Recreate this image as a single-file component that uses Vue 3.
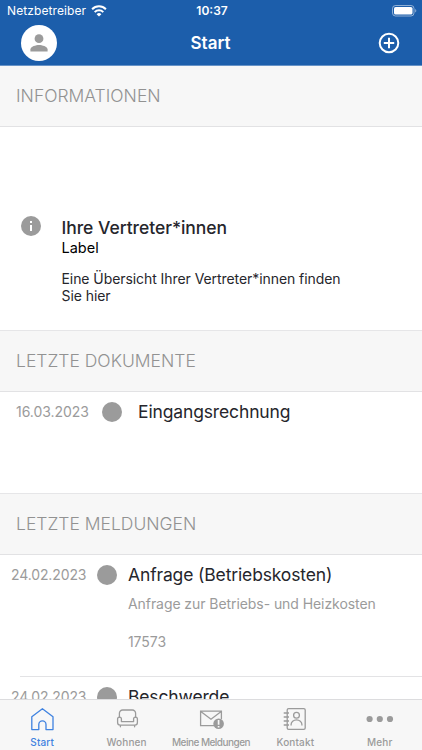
<script setup>
import { ref } from 'vue'

// letzte Dokumente und Meldungen der Startseite
const documents = [{ date: '16.03.2023', title: 'Eingangsrechnung' }]

const messages = [
  {
    date: '24.02.2023',
    title: 'Anfrage (Betriebskosten)',
    text: 'Anfrage zur Betriebs- und Heizkosten',
    number: '17573',
  },
  { date: '24.02.2023', title: 'Beschwerde', text: '', number: '' },
]

const tabs = [
  { id: 'start', label: 'Start' },
  { id: 'wohnen', label: 'Wohnen' },
  { id: 'meldungen', label: 'Meine Meldungen' },
  { id: 'kontakt', label: 'Kontakt' },
  { id: 'mehr', label: 'Mehr' },
]

const active_tab = ref('start')
</script>

<template>
  <div class="screen">
    <header class="header">
      <!-- Statusleiste -->
      <div class="status_bar">
        <div class="carrier">
          <span class="carrier_name">Netzbetreiber</span>
          <svg class="wifi" width="16" height="12" viewBox="0 0 16 12">
            <g fill="none" stroke="#fff" stroke-width="2">
              <path d="M1.1 4.2a9.8 9.8 0 0 1 13.8 0" />
              <path d="M3.7 7.1a6.1 6.1 0 0 1 8.6 0" />
            </g>
            <path d="M8 11.6 5.6 9.2a3.4 3.4 0 0 1 4.8 0z" fill="#fff" />
          </svg>
        </div>
        <span class="clock">10:37</span>
        <svg class="battery" width="25" height="12" viewBox="0 0 25 12">
          <rect x=".5" y=".5" width="21.5" height="10.5" rx="3" fill="none" stroke="#fff" stroke-opacity=".5" />
          <rect x="2" y="2" width="18.5" height="7.5" rx="1.6" fill="#fff" />
          <path d="M23.2 4v3.6c1.5-.6 1.5-3 0-3.6z" fill="#fff" fill-opacity=".5" />
        </svg>
      </div>

      <!-- Titelzeile -->
      <div class="nav_bar">
        <button class="avatar">
          <svg width="18" height="18" viewBox="0 0 18 18" fill="#9b9b9b">
            <circle cx="9" cy="4.7" r="4.4" />
            <path d="M.4 17.6v-2.2c0-2.9 5.7-4.4 8.6-4.4s8.6 1.5 8.6 4.4v2.2z" />
          </svg>
        </button>
        <h1 class="title">Start</h1>
        <button class="add">
          <svg width="22" height="22" viewBox="0 0 22 22" fill="none" stroke="#fff" stroke-width="2">
            <circle cx="11" cy="11" r="9.3" />
            <path d="M11 5.8v10.4M5.8 11h10.4" />
          </svg>
        </button>
      </div>
    </header>

    <main class="content">
      <h2 class="section_title informationen">INFORMATIONEN</h2>
      <section class="info">
        <svg class="info_icon" width="20" height="20" viewBox="0 0 20 20">
          <circle cx="10" cy="10" r="10" fill="#9b9b9b" />
          <path d="M9 5h2v2H9zM9 9h2v6H9z" fill="#fff" />
        </svg>
        <div class="info_body">
          <h3 class="info_title">Ihre Vertreter*innen</h3>
          <p class="info_label">Label</p>
          <p class="info_text">Eine Übersicht Ihrer Vertreter*innen finden<br />Sie hier</p>
        </div>
      </section>

      <h2 class="section_title dokumente">LETZTE DOKUMENTE</h2>
      <section class="documents">
        <div v-for="doc in documents" :key="doc.title" class="row">
          <span class="date">{{ doc.date }}</span>
          <span class="dot"></span>
          <h3 class="row_title">{{ doc.title }}</h3>
        </div>
      </section>

      <h2 class="section_title meldungen">LETZTE MELDUNGEN</h2>
      <section class="messages">
        <article v-for="(message, index) in messages" :key="index" class="message">
          <div class="row">
            <span class="date">{{ message.date }}</span>
            <span class="dot"></span>
            <h3 class="row_title">{{ message.title }}</h3>
          </div>
          <p class="message_text">{{ message.text }}</p>
          <p class="message_number">{{ message.number }}</p>
        </article>
      </section>
    </main>

    <!-- Tableiste unten -->
    <nav class="tab_bar">
      <button
        v-for="tab in tabs"
        :key="tab.id"
        class="tab"
        :class="[tab.id, { active: active_tab === tab.id }]"
        @click="active_tab = tab.id"
      >
        <svg class="tab_icon" width="28" height="26" viewBox="0 0 28 26" fill="none" stroke="currentColor" stroke-width="1.3">
          <path
            v-if="tab.id === 'start'"
            d="M3.8 9.7 14.4 1.7 25 9.7v12.9h-7v-5.2a3.6 3.6 0 0 0-7.2 0v5.2h-7z"
            stroke-linejoin="round"
          />
          <g v-else-if="tab.id === 'wohnen'" stroke-linejoin="round" stroke-linecap="round">
            <path d="M6.4 10.3V6.2a3.2 3.2 0 0 1 3.2-3.2h9.8a3.2 3.2 0 0 1 3.2 3.2v4.1" />
            <path d="M8.4 14.6v-2.5a1.9 1.9 0 0 0-3.8 0v3.5c0 1.6 1 2.6 2.6 2.6h14.6c1.6 0 2.6-1 2.6-2.6v-3.5a1.9 1.9 0 0 0-3.8 0v2.5z" />
            <path d="M7.4 18.6v1.2M21.6 18.6v1.2" />
          </g>
          <g v-else-if="tab.id === 'meldungen'">
            <path d="M17 18.6H3.6V4.2h20.8v8M3.8 4.4l10.2 7.9L24.2 4.4" />
            <circle cx="21.6" cy="16.8" r="5.3" fill="currentColor" stroke="none" />
            <path d="M21.6 13.1v4.6M21.6 18.9v1.6" stroke="#f7f7f7" stroke-width="1.7" />
          </g>
          <g v-else-if="tab.id === 'kontakt'">
            <rect x="6.2" y="1.6" width="18" height="20.8" rx="1.4" />
            <circle cx="15.5" cy="8.3" r="2.9" />
            <path d="M10.1 18.6v-1.1a5.4 4.6 0 0 1 10.8 0v1.1M2.7 6h5.3M2.7 10h5.3M2.7 14h5.3M2.7 18h5.3" />
          </g>
          <g v-else fill="currentColor" stroke="none">
            <circle cx="3.6" cy="12" r="3.1" />
            <circle cx="13.8" cy="12" r="3.1" />
            <circle cx="24" cy="12" r="3.1" />
          </g>
        </svg>
        <span class="tab_label">{{ tab.label }}</span>
      </button>
    </nav>
  </div>
</template>

<style>
body {
  margin: 0;
  overflow: hidden;
}
</style>

<style scoped>
.screen {
  display: flex;
  flex-direction: column;
  width: 100%;
  height: 100vh;
  overflow: hidden;
  background: #fff;
  color: #26262c;
  font-family: Inter, 'Liberation Sans', sans-serif;
}

h1,
h2,
h3,
p {
  margin: 0;
  font-weight: 400;
}

button {
  padding: 0;
  border: none;
  background: none;
  font-family: inherit;
}

svg {
  display: block;
}

.header {
  flex: none;
  box-sizing: border-box;
  height: 66px;
  border-bottom: 1px solid #6793c7;
  background: #1c5eab;
  color: #fff;
}

/* Statusleiste: Netz, Uhrzeit, Akku */
.status_bar {
  display: grid;
  grid-template-columns: 1fr auto 1fr;
  align-items: center;
  height: 21px;
  padding: 0 5px 0 7px;
}

.carrier {
  display: flex;
  align-items: center;
  gap: 5px;
}

.carrier_name {
  font-size: 12px;
  letter-spacing: 0.1px;
}

.clock {
  font-size: 12px;
  font-weight: 600;
}

.battery {
  justify-self: end;
}

.nav_bar {
  display: grid;
  grid-template-columns: 1fr auto 1fr;
  align-items: center;
  height: 44px;
  padding: 0 22px 0 21px;
}

.avatar {
  display: flex;
  align-items: center;
  justify-content: center;
  width: 36px;
  height: 36px;
  border-radius: 50%;
  background: #fff;
}

.title {
  font-size: 17px;
  font-weight: 600;
}

.add {
  justify-self: end;
}

.content {
  flex: 1;
  min-height: 0;
  overflow: hidden;
}

/* graue Abschnittszeilen */
.section_title {
  box-sizing: border-box;
  height: 62px;
  padding-left: 16px;
  border-top: 1px solid #e6e6e8;
  border-bottom: 1px solid #e2e2e4;
  background: #f7f7f7;
  color: #929292;
  font-size: 17.5px;
  font-weight: 300;
  line-height: 60px;
}

.section_title.informationen {
  height: 61px;
  border-top: none;
}

.info {
  display: flex;
  box-sizing: border-box;
  height: 203px;
  padding: 89px 21px 0;
  gap: 20.5px;
}

.info_icon {
  flex: none;
}

.info_title {
  padding-top: 1px;
  font-size: 17.5px;
  font-weight: 500;
  letter-spacing: -0.04px;
  line-height: 22px;
}

.info_label {
  margin-top: -1px;
  color: #000;
  font-size: 14.5px;
  line-height: 20px;
}

.info_text {
  margin-top: 12px;
  font-size: 14px;
  letter-spacing: -0.07px;
  line-height: 17px;
}

.row {
  display: flex;
  align-items: center;
  height: 40px;
}

.date {
  box-sizing: border-box;
  padding-bottom: 2px;
  color: #9b9b9b;
  font-size: 14px;
  letter-spacing: -0.05px;
}

.dot {
  width: 20px;
  height: 20px;
  border-radius: 50%;
  background: #9b9b9b;
}

.row_title {
  padding-bottom: 1px;
  font-size: 17.5px;
  letter-spacing: -0.14px;
}

.documents {
  height: 101px;
}

.documents .date {
  width: 102px;
  padding-left: 16px;
}

.documents .row_title {
  padding-left: 16px;
}

.message {
  height: 121px;
}

/* Trennlinie beginnt eingerückt */
.message + .message {
  padding-top: 1px;
  background: linear-gradient(#e3e3e5, #e3e3e5) 20px 0 / 100% 1px no-repeat;
}

.message .date {
  width: 97px;
  padding-left: 11px;
  letter-spacing: -0.12px;
}

.message .row_title {
  padding-left: 11px;
}

.message_text,
.message_number {
  padding-left: 128px;
  color: #9b9b9b;
  font-size: 14px;
  letter-spacing: -0.07px;
  line-height: 18px;
}

.message_number {
  margin-top: 20px;
}

.tab_bar {
  display: grid;
  grid-template-columns: repeat(5, 1fr);
  flex: none;
  box-sizing: border-box;
  height: 51px;
  border-top: 1px solid #dcdcde;
  background: #f7f7f7;
}

.tab {
  display: flex;
  flex-direction: column;
  align-items: center;
  padding-top: 7px;
  color: #9b9b9b;
}

.tab.active {
  color: #3f82e0;
}

.tab_label {
  margin-top: 3px;
  font-size: 10px;
  font-weight: 500;
  letter-spacing: 0.15px;
  line-height: 13px;
  white-space: nowrap;
}

/* langer Text, enger gesetzt */
.meldungen .tab_label {
  letter-spacing: -0.52px;
}
</style>
